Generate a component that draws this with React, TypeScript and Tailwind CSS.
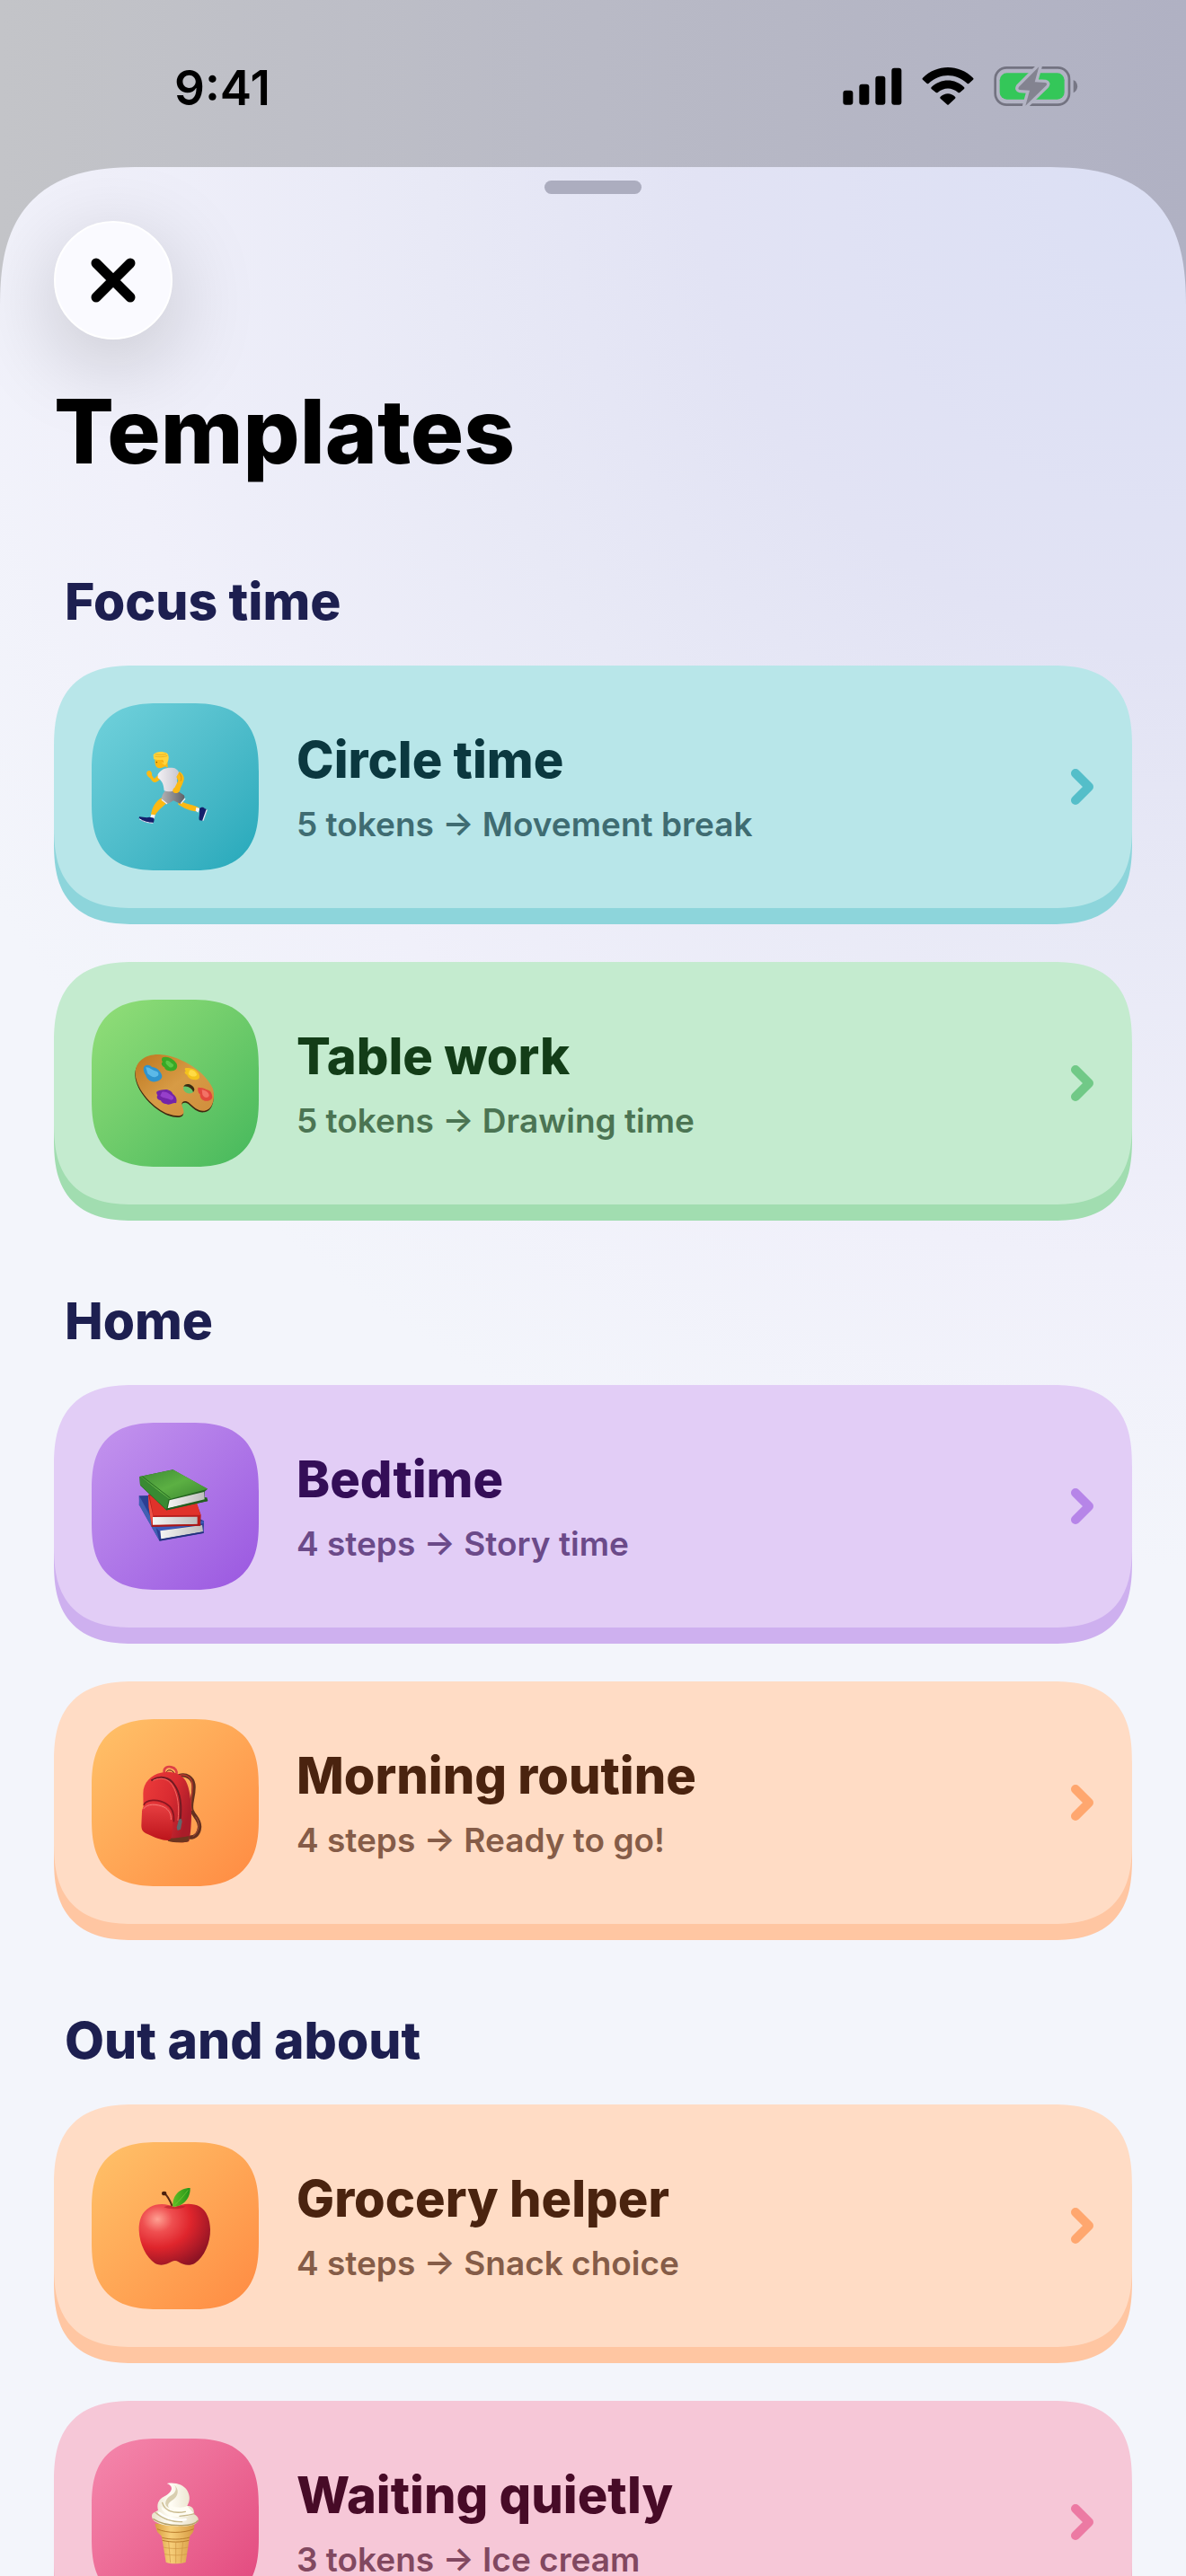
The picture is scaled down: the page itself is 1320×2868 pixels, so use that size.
import type { ReactNode } from "react"

function Runner() {
  return (
    <svg viewBox="37 39 558 558" className="size-full" aria-hidden="true">
      <defs>
        <linearGradient id="shirt" x1="0" x2="1">
          <stop offset="0" stopColor="#f1eff3" />
          <stop offset="1" stopColor="#c9c7d0" />
        </linearGradient>
        <linearGradient id="shorts" x1="0" x2="1">
          <stop offset="0" stopColor="#b3b1b3" />
          <stop offset="1" stopColor="#5f6268" />
        </linearGradient>
      </defs>
      <path d="M328 364C345 372 362 377 372 379C385 382 396 388 397 391L391 400C374 401 347 391 326 377Z" fill="#fdb913" />
      <path d="M276 352L292 368C278 382 261 391 247 416L235 412C238 391 248 365 276 352Z" fill="#fdb913" />
      <path d="M386 387L398 390L393 404L384 398Z" fill="#f4f4f8" />
      <path d="M236 410L249 412L246 426L233 421Z" fill="#f4f4f8" />
      <path d="M397 391C402 385 412 385 414 391C420 391 423 395 420 403L408 431L397 430C393 422 399 413 397 391Z" fill="#14206b" />
      <path d="M421 396L409 430" stroke="#e8eaf6" strokeWidth="4" strokeLinecap="round" />
      <path d="M196 418C204 417 220 423 230 419L245 422C247 430 245 437 241 439C225 440 205 434 195 424Z" fill="#14206b" />
      <path d="M196 425C209 434 227 439 242 439" stroke="#e8eaf6" strokeWidth="3" fill="none" />
      <path d="M281 333L320 329L345 346C351 354 344 365 334 375L310 364L290 376L270 362C270 350 275 341 281 333Z" fill="url(#shorts)" />
      <path d="M271 361L289 375M335 374L349 357" stroke="#efeef1" strokeWidth="4" />
      <path d="M262 277C255 282 250 288 246 291L238 280C240 271 234 263 229 264C221 265 219 272 222 278C224 285 232 287 234 291C239 302 246 305 252 302C260 299 266 293 270 288Z" fill="#fdb913" />
      <path d="M258 277C267 260 284 253 306 254C318 255 327 262 329 273L322 285C321 302 324 312 322 326C309 333 293 337 279 331C277 310 273 298 258 288Z" fill="url(#shirt)" />
      <path d="M330 267C340 273 347 284 345 294C342 306 337 315 333 324C333 333 325 341 315 339C305 337 306 325 314 321L326 298L320 285Z" fill="#fdb913" />
      <path d="M330 272C337 281 338 291 334 299" stroke="#dc930c" strokeWidth="3" fill="none" />
      <path d="M249 224C247 236 249 247 254 252C262 259 274 255 282 250L291 254L290 225Z" fill="#fdb913" />
      <path d="M243 211C252 198 276 199 287 205C298 212 295 231 288 239L283 246L276 242C269 239 271 229 275 227C266 229 251 229 244 225Z" fill="#ffd43c" />
      <path d="M270 230C275 226 280 232 275 239" fill="#f6a812" />
      <path d="M248 216C258 219 278 219 290 214M249 209C262 212 275 212 286 208" stroke="#e1a516" strokeWidth="2" fill="none" />
      <circle cx="254" cy="236" r="2" fill="#604000" />
    </svg>
  )
}

function Palette() {
  return (
    <svg viewBox="37 39 558 558" className="size-full" aria-hidden="true">
      <defs>
        <linearGradient id="wood" x1="0" y1="0" x2="1" y2="1">
          <stop offset="0" stopColor="#bd761f" />
          <stop offset="0.5" stopColor="#d79b45" />
          <stop offset="1" stopColor="#d08d3c" />
        </linearGradient>
      </defs>
      <path
        transform="translate(-1 5)"
        d="M183 287C182 243 221 218 271 223C341 230 419 282 442 337C451 372 439 408 414 410C394 413 377 397 363 384C351 374 337 378 338 389C340 402 349 413 342 421C334 431 312 427 294 421C247 404 185 341 183 287Z"
        fill="#3f2810"
      />
      <path
        fillRule="evenodd"
        d="M183 287C182 243 221 218 271 223C341 230 419 282 442 337C451 372 439 408 414 410C394 413 377 397 363 384C351 374 337 378 338 389C340 402 349 413 342 421C334 431 312 427 294 421C247 404 185 341 183 287Z"
        fill="url(#wood)"
      />
      <path d="M344 330C339 343 356 357 371 351C387 344 378 327 364 322C355 319 346 323 344 330Z" fill="#6ac36a" />
      <path d="M344 330C346 323 355 319 364 322C378 327 385 340 376 348C374 336 356 325 344 330Z" fill="#3f2810" />
      <path d="M274 232C288 225 311 237 320 251C326 263 321 275 306 277C290 278 282 274 280 265C268 258 269 247 274 248C270 241 270 236 274 232Z" fill="#39a926" />
      <path d="M286 243C295 240 302 252 310 255C312 264 303 269 295 263C292 258 280 254 286 243Z" fill="#5cc747" />
      <path d="M212 263C219 255 232 256 238 264C253 264 265 275 271 290C275 300 268 307 253 312C236 318 219 302 218 291C211 282 208 269 212 263Z" fill="#2f93cd" />
      <path d="M218 265C230 263 240 276 253 278C263 281 263 294 252 296C242 302 231 292 224 286Z" fill="#5bb9e8" />
      <path d="M351 267C361 266 382 268 391 281C399 292 400 303 388 306C372 309 356 298 356 290C345 286 347 277 352 278C347 273 347 269 351 267Z" fill="#f4c31c" />
      <path d="M364 275C374 271 386 280 388 290C382 301 365 294 360 287Z" fill="#ffdb45" />
      <path d="M393 332C400 332 413 334 420 339C433 341 439 352 440 363C441 372 428 379 415 377C402 374 398 363 399 355C392 351 390 337 393 332Z" fill="#e3483d" />
      <path d="M405 340C416 342 429 348 429 360C425 370 411 366 407 356Z" fill="#f37266" />
      <path d="M256 345C266 339 275 341 284 339C296 339 305 346 308 354C320 361 323 375 319 385C308 382 305 390 292 389C280 387 271 385 268 376C255 373 253 365 257 358C253 353 252 347 256 345Z" fill="#7425a8" />
      <path d="M272 347C288 344 296 355 307 361C315 368 307 378 298 373C286 366 273 368 266 360Z" fill="#963fca" />
    </svg>
  )
}

function Books() {
  return (
    <svg viewBox="37 42 558 558" className="size-full" aria-hidden="true">
      <defs>
        <linearGradient id="greenCover" x1="0" x2="1" y2="1">
          <stop offset="0" stopColor="#3d8a34" />
          <stop offset="0.5" stopColor="#5cb043" />
          <stop offset="1" stopColor="#39852f" />
        </linearGradient>
        <linearGradient id="pages" x1="0" x2="1">
          <stop offset="0" stopColor="#f5f5f3" />
          <stop offset="1" stopColor="#bdbdbc" />
        </linearGradient>
      </defs>
      <path d="M195 286L236 285L412 370L411 411L264 437L196 316Z" fill="#2c3f94" />
      <path d="M197 288L251 388L263 436L195 316Z" fill="#4160b3" />
      <path d="M249 390L412 370L411 378L263 404Z" fill="#3c59b6" />
      <path d="M266 403L406 384L409 406L269 431Z" fill="url(#pages)" />
      <path d="M263 434L411 408" stroke="#22317b" strokeWidth="5" />
      <path d="M226 281L385 305L402 350L400 386L238 389L228 326Z" fill="#b71c1c" />
      <path d="M230 285L388 309L401 350L243 352Z" fill="#e0322a" />
      <path d="M226 281L242 352L238 388L228 326Z" fill="#ef5145" />
      <path d="M241 357L390 356L390 381L241 383Z" fill="url(#pages)" />
      <path d="M237 387L401 383" stroke="#a81717" strokeWidth="5" />
      <path d="M197 222L199 251L286 334L425 303L422 292L414 291L414 272L424 263L308 199Z" fill="#23631f" />
      <path d="M197 222L309 199L425 263L295 298Z" fill="url(#greenCover)" />
      <path d="M197 222L294 297L287 332L199 250Z" fill="#398a32" />
      <path d="M207 222L300 294" stroke="#276c22" strokeWidth="3" />
      <path d="M297 301L412 273L414 298L291 328Z" fill="url(#pages)" />
      <path d="M286 332L424 301" stroke="#235e20" strokeWidth="5" />
    </svg>
  )
}

function Backpack() {
  return (
    <svg viewBox="37 42 558 558" className="size-full" aria-hidden="true">
      <defs>
        <linearGradient id="bag" x1="0" y1="0" x2="1" y2="0.5">
          <stop offset="0" stopColor="#ed3c3b" />
          <stop offset="0.6" stopColor="#d92b31" />
          <stop offset="1" stopColor="#aa1c29" />
        </linearGradient>
        <linearGradient id="pocket" x1="0" x2="0" y2="1">
          <stop offset="0" stopColor="#e84042" />
          <stop offset="1" stopColor="#bd151c" />
        </linearGradient>
      </defs>
      <path d="M330 231C354 224 374 239 377 260C382 292 363 327 372 348C380 368 400 379 397 404C395 424 384 437 365 437" fill="none" stroke="#64301f" strokeWidth="13" strokeLinecap="round" />
      <path d="M330 229C354 224 371 238 373 259C377 289 362 323 371 348" fill="none" stroke="#b9382f" strokeWidth="4" />
      <path d="M384 368C402 389 395 421 375 434" fill="none" stroke="#a84d3c" strokeWidth="3" />
      <path d="M279 221C277 203 291 199 303 202C317 205 323 216 320 226" fill="none" stroke="#df4145" strokeWidth="8" />
      <path d="M286 222C287 209 307 209 313 224" fill="none" stroke="#59151a" strokeWidth="3" />
      <path d="M209 290C209 253 237 227 268 221C302 212 337 224 351 248C374 288 374 394 362 450C344 457 314 454 292 448L211 418Z" fill="url(#bag)" />
      <path d="M293 440C322 440 345 436 363 432L361 450C342 457 311 454 292 449Z" fill="#6e351f" />
      <path d="M236 247C265 229 298 235 313 261C337 294 338 341 332 385" fill="none" stroke="#701b23" strokeWidth="6" />
      <path d="M242 247C268 235 291 240 306 262C326 294 330 337 325 381" fill="none" stroke="#f36861" strokeWidth="3" />
      <path d="M211 329C218 309 260 308 285 324C306 336 314 354 311 385" fill="none" stroke="#881721" strokeWidth="5" />
      <path d="M205 350C207 327 231 320 259 325C288 329 307 347 307 371C308 400 308 424 300 443C287 453 252 440 224 426C208 420 203 412 203 397Z" fill="url(#pocket)" />
      <path d="M210 342C222 323 255 325 279 336C295 345 303 359 302 378" fill="none" stroke="#f47773" strokeWidth="3" />
      <path d="M328 377L336 374L339 384L334 410L324 414L321 404Z" fill="#62666a" />
    </svg>
  )
}

function Apple() {
  return (
    <svg viewBox="37 45 558 558" className="size-full" aria-hidden="true">
      <defs>
        <radialGradient id="apple" cx="0.26" cy="0.25" r="0.85">
          <stop offset="0" stopColor="#ffa092" />
          <stop offset="0.25" stopColor="#ef4f50" />
          <stop offset="0.55" stopColor="#df252c" />
          <stop offset="1" stopColor="#8e1324" />
        </radialGradient>
        <linearGradient id="leaf" x1="0" x2="1">
          <stop offset="0" stopColor="#62bd25" />
          <stop offset="1" stopColor="#249419" />
        </linearGradient>
      </defs>
      <path d="M314 262C290 250 257 247 232 262C204 278 194 306 195 340C197 386 219 430 249 450C270 461 290 452 304 444C313 440 319 440 327 445C345 457 366 459 382 449C413 428 434 381 433 336C432 302 421 274 398 260C371 246 339 250 314 262Z" fill="url(#apple)" />
      <path d="M278 262C294 270 333 270 350 260C337 254 326 258 314 262C302 256 290 255 278 262Z" fill="#a91520" opacity="0.5" />
      <path d="M279 215C292 225 299 241 306 258" fill="none" stroke="#5b2a13" strokeWidth="6" />
      <ellipse cx="279" cy="216" rx="8" ry="7" fill="#4b200e" />
      <path d="M308 261C305 228 326 198 366 198C367 227 349 259 308 261Z" fill="url(#leaf)" />
      <path d="M314 255C331 241 345 222 359 205" fill="none" stroke="#7bd23b" strokeWidth="2" />
    </svg>
  )
}

function IceCream() {
  return (
    <svg viewBox="-114 -75 558 558" className="size-full" aria-hidden="true">
      <defs>
        <linearGradient id="cone" x1="0" x2="1">
          <stop offset="0" stopColor="#d79c3e" />
          <stop offset="0.4" stopColor="#f7ce79" />
          <stop offset="1" stopColor="#d69a41" />
        </linearGradient>
        <linearGradient id="cream" x1="0" x2="1">
          <stop offset="0" stopColor="#e9e1ca" />
          <stop offset="0.4" stopColor="#fffdf5" />
          <stop offset="1" stopColor="#e5dcc2" />
        </linearGradient>
      </defs>
      <path d="M97 209L230 209L226 233C224 242 214 247 213 254L200 338C178 344 150 344 134 338L120 253C118 245 107 243 104 233Z" fill="url(#cone)" />
      <path d="M105 227C137 242 193 242 227 227M121 256C150 263 185 263 213 255M122 265C151 272 184 272 211 265" fill="none" stroke="#b97d2d" strokeWidth="3" />
      <path d="M143 270L149 340M167 271V341M191 269L184 340M125 288C154 294 182 294 208 288M129 311C155 316 182 316 204 311" fill="none" stroke="#cf9542" strokeWidth="2" />
      <path d="M137 75C165 70 193 79 205 98C216 117 214 134 205 150C222 149 230 162 227 177C239 182 245 192 241 201C234 215 206 219 182 217C151 218 113 214 96 201C83 191 84 173 98 170L108 164C101 141 113 124 132 116C151 106 165 85 137 75Z" fill="url(#cream)" />
      <path d="M160 78C181 94 176 119 155 131C139 141 139 150 145 157C124 149 132 125 151 115C169 104 172 90 160 78Z" fill="#d9cfb0" />
      <path d="M205 150C188 159 161 155 145 146C150 164 180 174 201 168C180 180 139 173 119 152C118 173 151 187 190 187C207 186 221 181 227 175" fill="#fffdf4" />
      <path d="M122 139C129 164 157 178 199 169M99 172C119 191 153 204 188 203M180 184C203 182 220 179 228 176" fill="none" stroke="#c8b98d" strokeWidth="4" strokeLinecap="round" />
      <path d="M91 193C116 210 151 216 188 215C214 215 234 209 242 198" fill="none" stroke="#b6a26b" strokeWidth="4" />
      <path d="M111 173C133 191 165 200 200 195" fill="none" stroke="#ffffff" strokeWidth="7" strokeLinecap="round" />
    </svg>
  )
}

type Theme = {
  card: string
  tile: string
  title: string
  subtitle: string
  chevron: string
}

const themes: Record<string, Theme> = {
  teal: {
    card: "bg-[#b8e6e9] shadow-[0_18px_0_#8dd5db]",
    tile: "from-[#71d2dc] to-[#22a8ba]",
    title: "text-[#0b383f]",
    subtitle: "text-[#3f6c72]",
    chevron: "text-[#54bec9]",
  },
  green: {
    card: "bg-[#c4ebcf] shadow-[0_18px_0_#a1ddb0]",
    tile: "from-[#93df79] to-[#43b85c]",
    title: "text-[#133d18]",
    subtitle: "text-[#4b7453]",
    chevron: "text-[#71c987]",
  },
  purple: {
    card: "bg-[#e2cdf6] shadow-[0_18px_0_#ceb0ef]",
    tile: "from-[#c495ee] to-[#9a56e0]",
    title: "text-[#340e57]",
    subtitle: "text-[#6b4a89]",
    chevron: "text-[#b685e8]",
  },
  orange: {
    card: "bg-[#ffdcc5] shadow-[0_18px_0_#ffc6a2]",
    tile: "from-[#ffc269] to-[#ff8a42]",
    title: "text-[#4a230f]",
    subtitle: "text-[#855c48]",
    chevron: "text-[#ffa76f]",
  },
  pink: {
    card: "bg-[#f6c7d7] shadow-[0_18px_0_#efa5bf]",
    tile: "from-[#f588ad] to-[#e1457c]",
    title: "text-[#470b27]",
    subtitle: "text-[#814860]",
    chevron: "text-[#ec7aa3]",
  },
}

type Template = {
  title: string
  subtitle: string
  theme: Theme
  art: ReactNode
}

const sections: { heading: string; items: Template[] }[] = [
  {
    heading: "Focus time",
    items: [
      { title: "Circle time", subtitle: "5 tokens → Movement break", theme: themes.teal, art: <Runner /> },
      { title: "Table work", subtitle: "5 tokens → Drawing time", theme: themes.green, art: <Palette /> },
    ],
  },
  {
    heading: "Home",
    items: [
      { title: "Bedtime", subtitle: "4 steps → Story time", theme: themes.purple, art: <Books /> },
      { title: "Morning routine", subtitle: "4 steps → Ready to go!", theme: themes.orange, art: <Backpack /> },
    ],
  },
  {
    heading: "Out and about",
    items: [
      { title: "Grocery helper", subtitle: "4 steps → Snack choice", theme: themes.orange, art: <Apple /> },
      { title: "Waiting quietly", subtitle: "3 tokens → Ice cream", theme: themes.pink, art: <IceCream /> },
    ],
  },
]

const bolt = "M675 74L608 141Q603 149 612 151L644 153L630 204L699 137Q705 129 696 127L661 125Z"

function StatusBar() {
  return (
    <header className="flex h-[186px] shrink-0 items-start justify-between pt-[66px] pr-[120px] pl-[194px]">
      <time className="text-[53px] leading-[64px] font-semibold">9:41</time>
      <svg viewBox="20 73 786 132" className="mt-2 h-11 w-[262px]" role="img" aria-label="Signal, Wi-Fi, battery charging">
        <mask id="boltGap" maskUnits="userSpaceOnUse" x="520" y="60" width="290" height="160">
          <rect x="520" y="60" width="290" height="160" fill="white" />
          <path d={bolt} fill="black" stroke="black" strokeWidth="20" strokeLinejoin="round" />
        </mask>
        <rect x="21" y="153" width="33" height="48" rx="9" />
        <rect x="75" y="132" width="33" height="69" rx="9" />
        <rect x="129" y="105" width="33" height="96" rx="9" />
        <rect x="183" y="78" width="33" height="123" rx="9" />
        <path d="M287 111C334 64 408 64 455 111Q458 114 455 117L441 130Q438 132 435 129C398 94 344 94 307 129Q304 132 301 130L287 117Q284 114 287 111Z" />
        <path d="M316 142C347 112 395 112 425 142Q428 145 425 148L411 160Q408 162 405 160C385 142 357 142 337 160Q334 162 331 160L316 148Q313 145 316 142Z" />
        <path d="M346 174C360 160 382 160 395 174Q398 177 395 180L374 200Q371 203 368 200L346 180Q343 177 346 174Z" />
        <g mask="url(#boltGap)">
          <rect x="529" y="77" width="247" height="124" rx="38" fill="none" stroke="#737381" strokeWidth="8" />
          <rect x="544" y="95" width="216" height="88" rx="24" fill="#34c759" />
        </g>
        <path d="M790 118C808 127 808 152 790 161Z" fill="#777785" />
        <path d={bolt} fill="#838390" />
      </svg>
    </header>
  )
}

function TemplateCard({ title, subtitle, theme, art }: Template) {
  return (
    <button
      type="button"
      className={`mb-[18px] flex w-full items-center gap-[42px] rounded-[92px] p-[42px] text-left [corner-shape:superellipse(1.4)] ${theme.card}`}
    >
      <span
        className={`size-[186px] shrink-0 overflow-hidden rounded-[76px] bg-linear-to-br [corner-shape:superellipse(1.4)] ${theme.tile}`}
      >
        {art}
      </span>
      <span className="flex min-w-0 flex-1 flex-col gap-3">
        <span className={`text-[56px] leading-[72px] font-extrabold ${theme.title}`}>{title}</span>
        <span className={`text-[37px] leading-[48px] font-semibold ${theme.subtitle}`}>{subtitle}</span>
      </span>
      <svg viewBox="0 0 28 42" className={`h-[42px] w-7 shrink-0 ${theme.chevron}`} fill="none" aria-hidden="true">
        <path d="M7 6L22 21L7 36" stroke="currentColor" strokeWidth="10" strokeLinecap="round" strokeLinejoin="round" />
      </svg>
    </button>
  )
}

export default function App() {
  return (
    <div className="flex h-screen flex-col overflow-hidden bg-linear-to-r from-[#c3c4c8] via-[#b9bac6] to-[#b0b1c3] font-[Inter,sans-serif] text-black">
      <StatusBar />

      <main className="relative min-h-0 flex-1 overflow-y-auto rounded-t-[158px] bg-[radial-gradient(circle_at_100%_0%,#dbdff4,#e2e3f4_540px,#e8e9f6_840px,#f0f0fa_1220px,#f3f5fb_1560px)] px-[60px] pt-[60px] [corner-shape:superellipse(1.4)] [scrollbar-width:none]">
        <div className="absolute top-[15px] left-1/2 h-[15px] w-[108px] -translate-x-1/2 rounded-full bg-[#acadbf]" />

        <button
          type="button"
          aria-label="Close"
          className="flex size-[132px] items-center justify-center rounded-full border-2 border-white bg-[#fafaff] shadow-[0_24px_100px_rgba(0,0,0,0.2)]"
        >
          <svg viewBox="0 0 50 50" className="size-[50px]" fill="none" aria-hidden="true">
            <path d="M6 6L44 44M44 6L6 44" stroke="black" strokeWidth="11" strokeLinecap="round" />
          </svg>
        </button>

        <h1 className="mt-[42px] mb-[94px] text-[99px] leading-[120px] font-extrabold">Templates</h1>

        <div className="flex flex-col gap-[76px]">
          {sections.map(section => (
            <section key={section.heading}>
              <h2 className="mb-[35px] pl-3 text-[57px] leading-[72px] font-extrabold text-[#1d1f50]">{section.heading}</h2>
              <div className="flex flex-col gap-[42px]">
                {section.items.map(item => (
                  <TemplateCard key={item.title} {...item} />
                ))}
              </div>
            </section>
          ))}
        </div>
      </main>
    </div>
  )
}
